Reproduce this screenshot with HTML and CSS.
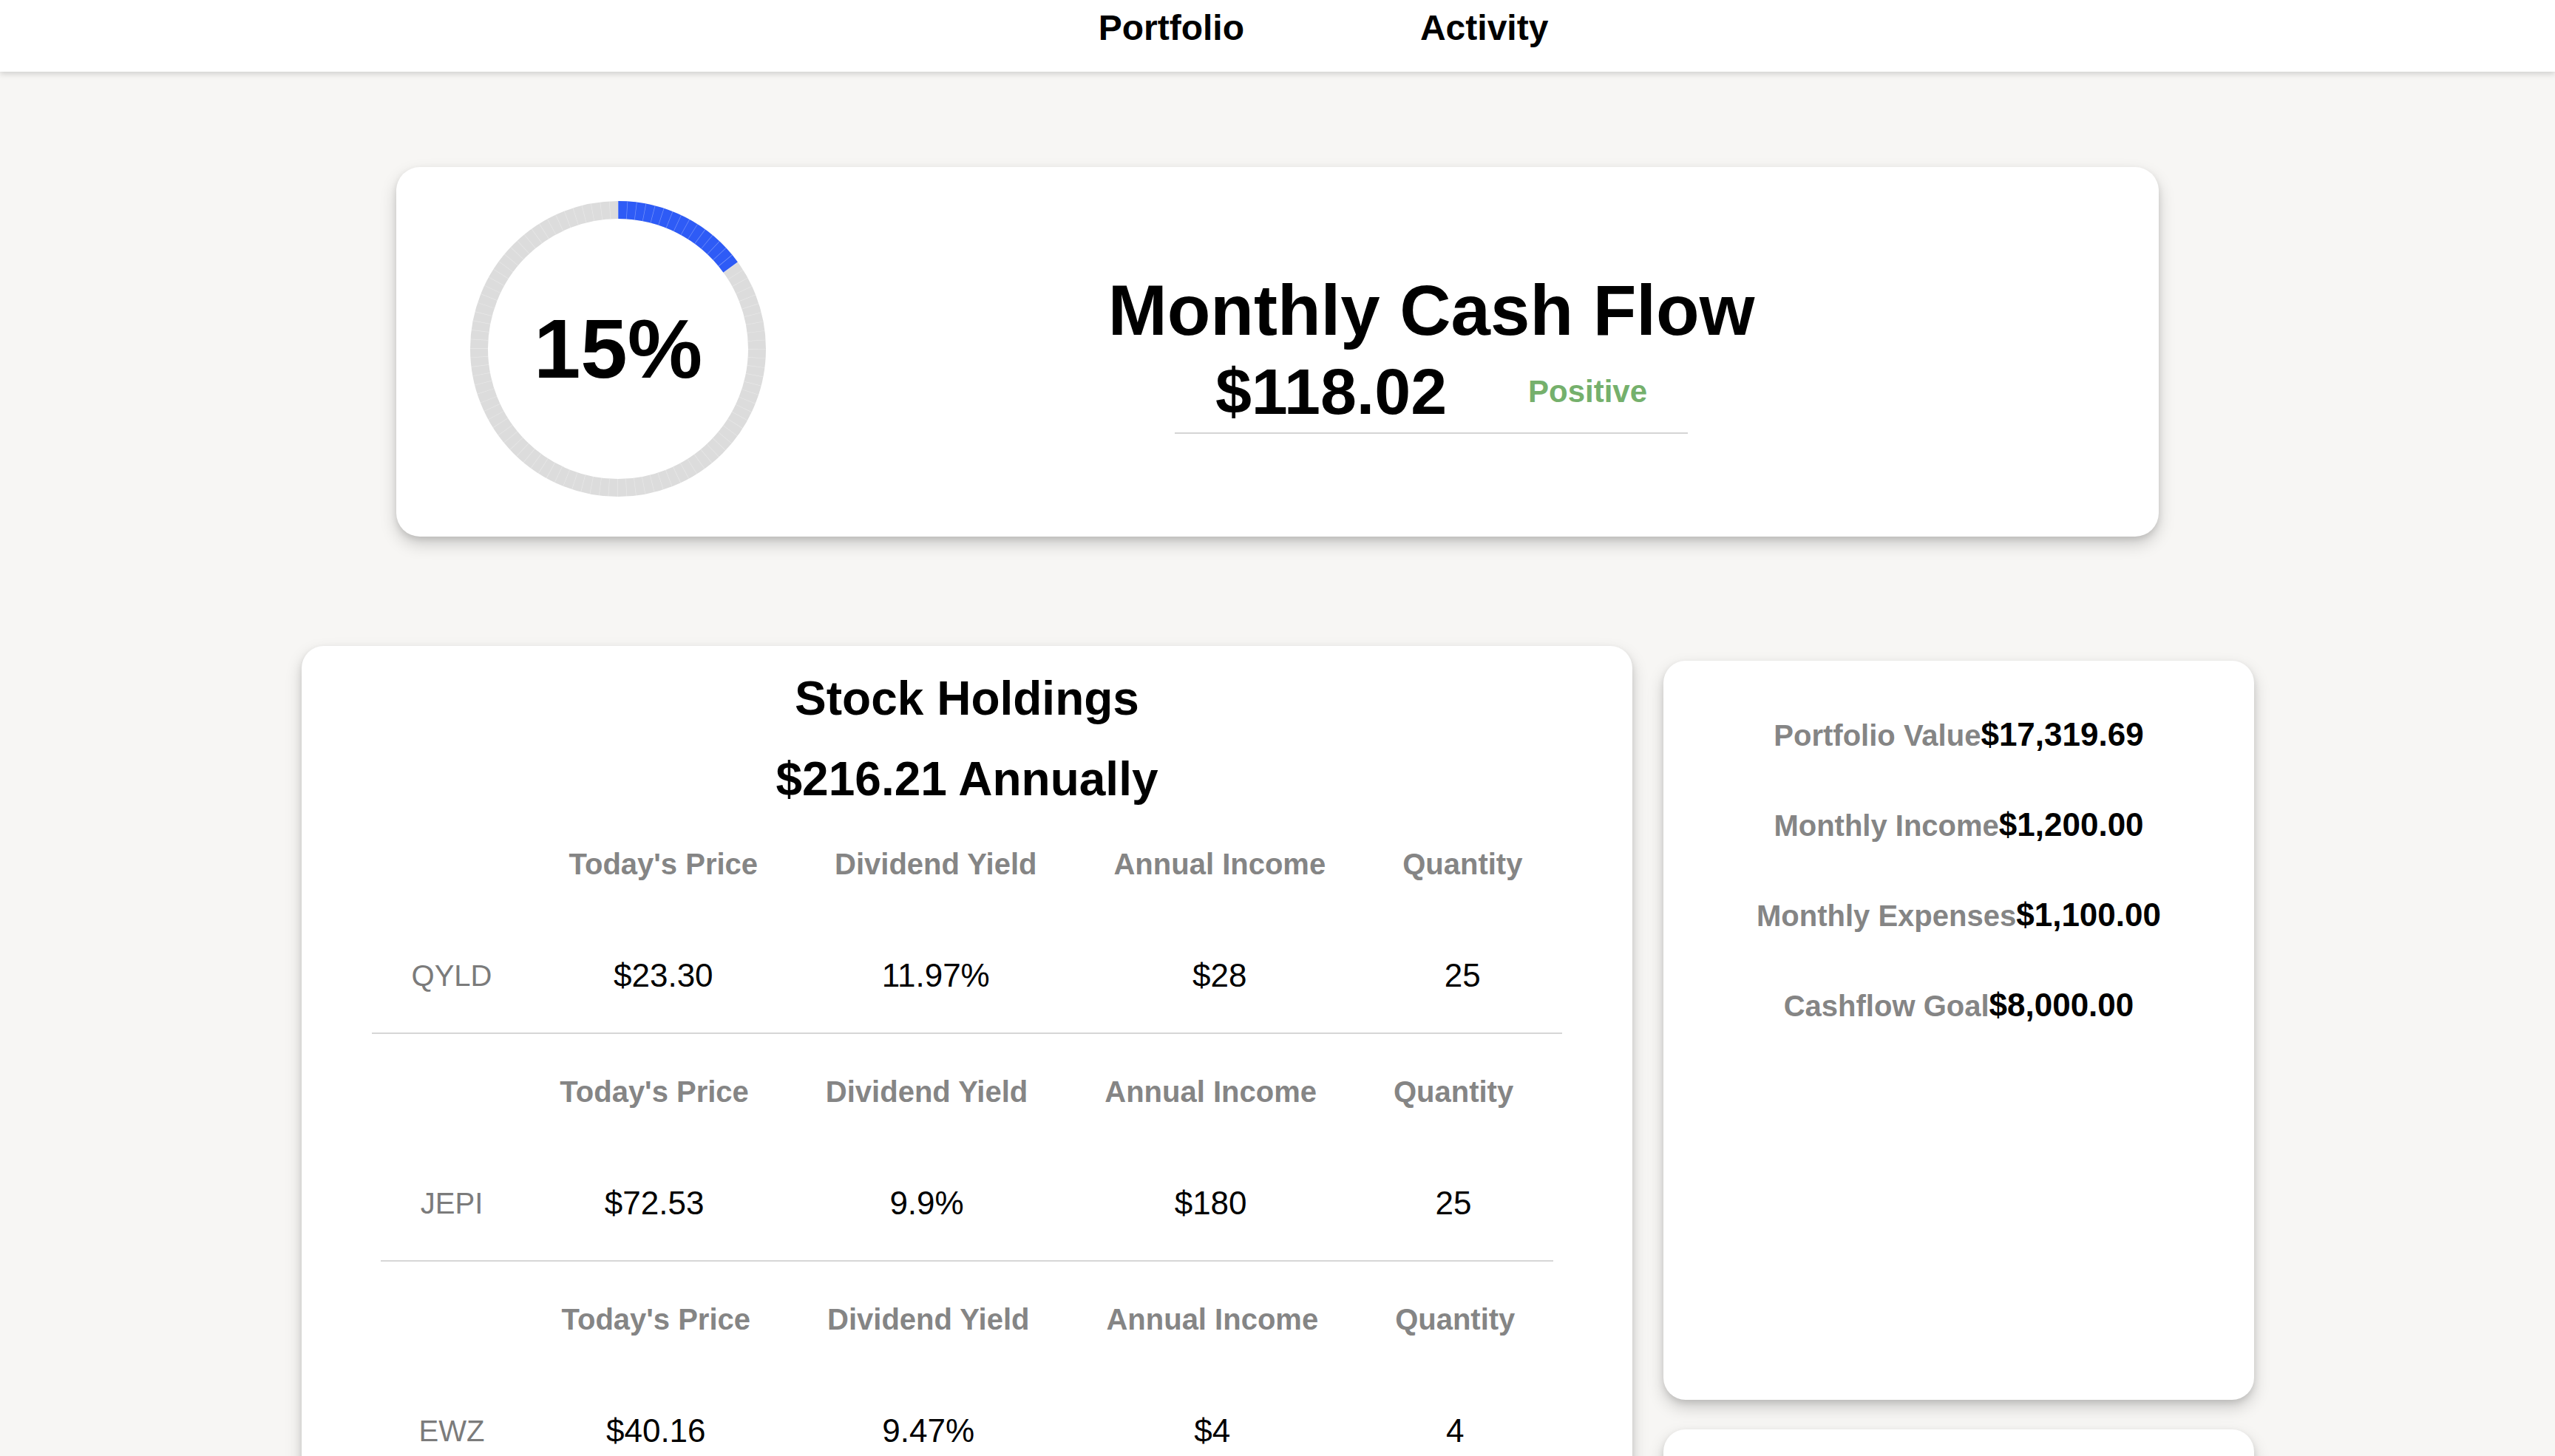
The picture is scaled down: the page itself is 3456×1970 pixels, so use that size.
FILE: index.html
```html
<!DOCTYPE html>
<html lang="en">
<head>
<meta charset="utf-8">
<title>Portfolio</title>
<link rel="stylesheet" href="styles.css">
</head>
<body>
<nav class="topnav">
  <a class="navlink" href="#">Portfolio</a>
  <a class="navlink" href="#">Activity</a>
</nav>

<main class="page">
  <section class="card summary">
    <div class="ring">
      <svg class="ring-svg" width="400" height="400" viewBox="0 0 400 400">
        <circle cx="200" cy="200" r="188" fill="none" stroke="#dcdcdc" stroke-width="24"/>
        <circle cx="200" cy="200" r="188" fill="none" stroke="#2e5bf6" stroke-width="24"
                stroke-dasharray="177.2 1200" transform="rotate(-90 200 200)"/>
        <circle cx="200" cy="200" r="188" fill="none" stroke="rgba(255,255,255,0.35)" stroke-width="24"
                stroke-dasharray="0.7 11.112" transform="rotate(-90 200 200)"/>
      </svg>
      <div class="ring-label">15%</div>
    </div>
    <div class="cashflow">
      <h1 class="cashflow-title">Monthly Cash Flow</h1>
      <div class="cashflow-row">
        <span class="cashflow-amount">$118.02</span>
        <span class="cashflow-status">Positive</span>
      </div>
    </div>
  </section>

  <div class="lower">
    <section class="card holdings">
      <h2 class="holdings-title">Stock Holdings</h2>
      <h2 class="holdings-total">$216.21 Annually</h2>

      <table class="stock">
        <thead>
          <tr><th></th><th>Today's Price</th><th>Dividend Yield</th><th>Annual Income</th><th>Quantity</th></tr>
        </thead>
        <tbody>
          <tr><td class="ticker">QYLD</td><td>$23.30</td><td>11.97%</td><td>$28</td><td>25</td></tr>
        </tbody>
      </table>

      <table class="stock">
        <thead>
          <tr><th></th><th>Today's Price</th><th>Dividend Yield</th><th>Annual Income</th><th>Quantity</th></tr>
        </thead>
        <tbody>
          <tr><td class="ticker">JEPI</td><td>$72.53</td><td>9.9%</td><td>$180</td><td>25</td></tr>
        </tbody>
      </table>

      <table class="stock">
        <thead>
          <tr><th></th><th>Today's Price</th><th>Dividend Yield</th><th>Annual Income</th><th>Quantity</th></tr>
        </thead>
        <tbody>
          <tr><td class="ticker">EWZ</td><td>$40.16</td><td>9.47%</td><td>$4</td><td>4</td></tr>
        </tbody>
      </table>
    </section>

    <aside class="side">
      <section class="card stats">
        <div class="stat"><span class="stat-label">Portfolio Value</span><span class="stat-value">$17,319.69</span></div>
        <div class="stat"><span class="stat-label">Monthly Income</span><span class="stat-value">$1,200.00</span></div>
        <div class="stat"><span class="stat-label">Monthly Expenses</span><span class="stat-value">$1,100.00</span></div>
        <div class="stat"><span class="stat-label">Cashflow Goal</span><span class="stat-value">$8,000.00</span></div>
      </section>
      <section class="card side-extra"></section>
    </aside>
  </div>
</main>
</body>
</html>
```

FILE: styles.css
```css
html, body {
  margin: 0;
  padding: 0;
}

body {
  background: #f7f6f4;
  font-family: "Liberation Sans", Arial, Helvetica, sans-serif;
  color: #000;
}

.topnav {
  height: 97px;
  box-sizing: border-box;
  background: #fff;
  display: flex;
  justify-content: center;
  align-items: flex-start;
  gap: 238px;
  padding: 10px 0 0 124px;
  box-shadow: 0 3px 8px rgba(0, 0, 0, 0.16);
  position: relative;
  z-index: 1;
}

.navlink {
  font-size: 48px;
  font-weight: 700;
  color: #000;
  text-decoration: none;
  line-height: 55px;
}

.page {
  padding-top: 129px;
  padding-bottom: 200px;
}

.card {
  background: #fff;
  border-radius: 30px;
  box-shadow: 0 10px 22px rgba(0, 0, 0, 0.18), 0 4px 8px rgba(0, 0, 0, 0.1);
}

/* Summary card */
.summary {
  width: 2384px;
  height: 500px;
  box-sizing: border-box;
  margin: 0 auto;
  display: flex;
  align-items: center;
  padding: 0 84px 0 100px;
  border-radius: 32px;
}

.ring {
  width: 400px;
  height: 400px;
  display: grid;
  place-items: center;
  margin-bottom: 8px;
  flex: none;
}

.ring-svg,
.ring-label {
  grid-area: 1 / 1;
}

.ring-svg {
  display: block;
}

.ring-label {
  font-size: 114px;
  font-weight: 700;
  line-height: 1;
  margin-top: 0;
}

.cashflow {
  flex: 1;
  display: flex;
  flex-direction: column;
  align-items: center;
}

.cashflow-title {
  margin: 0;
  font-size: 96px;
  line-height: 110px;
  font-weight: 700;
}

.cashflow-row {
  width: 694px;
  margin-top: 11px;
  padding-bottom: 11px;
  border-bottom: 2px solid #d4d4d4;
  display: flex;
  justify-content: space-around;
  align-items: center;
}

.cashflow-amount {
  font-size: 88px;
  line-height: 88px;
  font-weight: 700;
}

.cashflow-status {
  font-size: 42px;
  font-weight: 700;
  color: #75b06c;
}

/* Lower section */
.lower {
  width: 2640px;
  margin: 148px auto 0;
  display: flex;
  align-items: flex-start;
  gap: 42px;
}

.holdings {
  width: 1800px;
  flex: none;
  box-sizing: border-box;
  padding: 34px 0 60px;
  text-align: center;
}

.holdings-title,
.holdings-total {
  margin: 0;
  font-size: 64px;
  line-height: 74px;
  font-weight: 700;
}

.holdings-total {
  margin-top: 35px;
}

.stock {
  margin: 0 auto;
  border-spacing: 4px;
  border-bottom: 2px solid #d6d6d6;
}

.stock th {
  font-size: 40px;
  line-height: 46px;
  font-weight: 700;
  color: #858585;
  padding: 51px 50px;
  white-space: nowrap;
}

.stock td {
  font-size: 44px;
  line-height: 50px;
  color: #000;
  padding: 48px 50px;
  text-align: center;
  white-space: nowrap;
}

.stock td.ticker {
  font-size: 40px;
  color: #7b7b7b;
}

/* Side column */
.side {
  width: 799px;
  flex: none;
  margin-top: 20px;
  display: flex;
  flex-direction: column;
  gap: 40px;
}

.stats {
  height: 1000px;
  box-sizing: border-box;
  padding-top: 39px;
}

.stat {
  height: 122px;
  line-height: 122px;
  font-size: 44px;
  text-align: center;
  white-space: nowrap;
}

.stat-label {
  font-size: 40px;
  font-weight: 700;
  color: #858585;
}

.stat-value {
  font-size: 44px;
  font-weight: 700;
  color: #000;
}

.side-extra {
  height: 420px;
}
```
